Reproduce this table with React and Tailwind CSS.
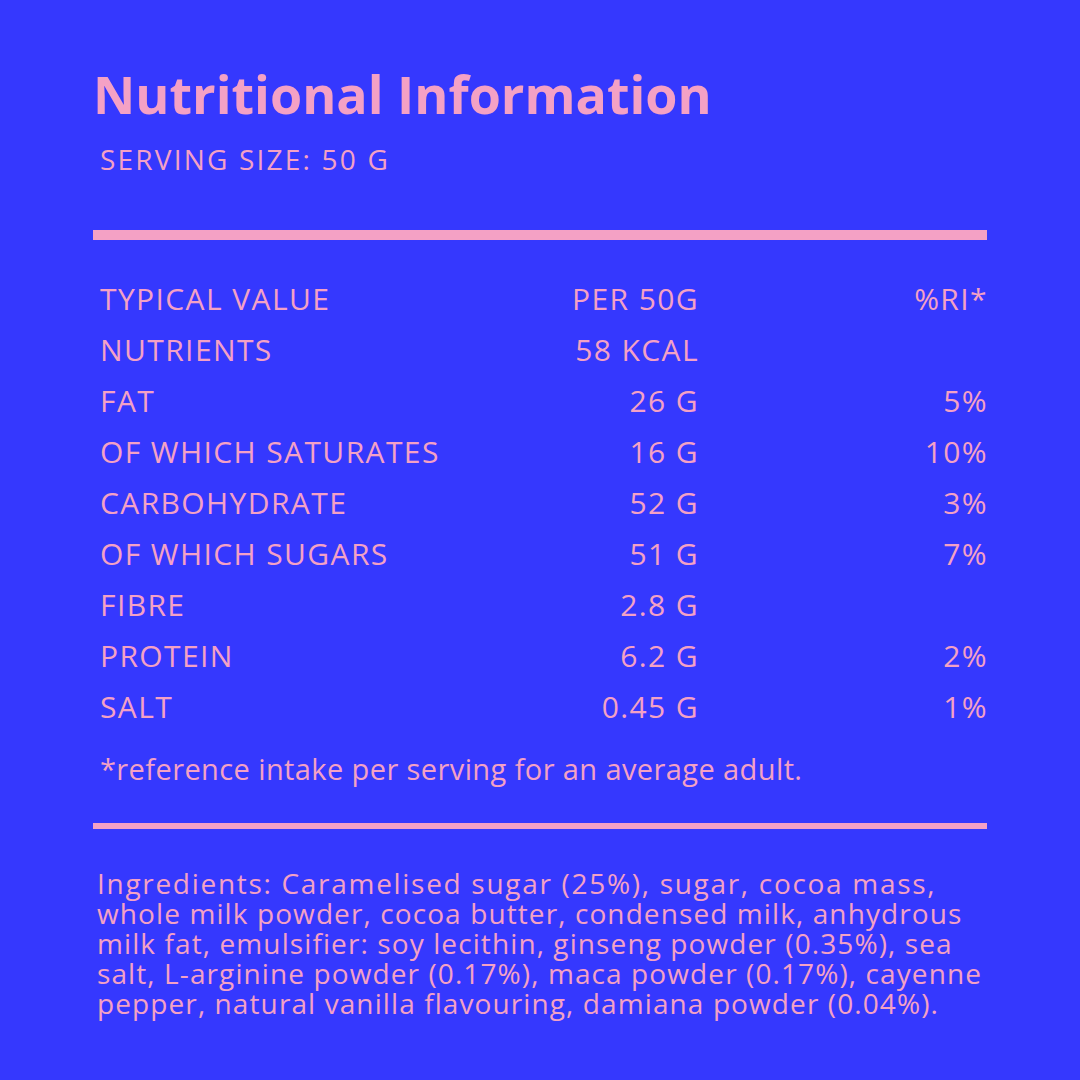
const rows = [
  { label: 'TYPICAL VALUE', per: 'PER 50G', ri: '%RI*' },
  { label: 'NUTRIENTS', per: '58 KCAL', ri: '' },
  { label: 'FAT', per: '26 G', ri: '5%' },
  { label: 'OF WHICH SATURATES', per: '16 G', ri: '10%' },
  { label: 'CARBOHYDRATE', per: '52 G', ri: '3%' },
  { label: 'OF WHICH SUGARS', per: '51 G', ri: '7%' },
  { label: 'FIBRE', per: '2.8 G', ri: '' },
  { label: 'PROTEIN', per: '6.2 G', ri: '2%' },
  { label: 'SALT', per: '0.45 G', ri: '1%' },
]

// wrapped as in the printed label
const ingredients = [
  { text: 'Ingredients: Caramelised sugar (25%), sugar, cocoa mass,', wide: true },
  { text: 'whole milk powder, cocoa butter, condensed milk, anhydrous' },
  { text: 'milk fat, emulsifier: soy lecithin, ginseng powder (0.35%), sea' },
  { text: 'salt, L-arginine powder (0.17%), maca powder (0.17%), cayenne' },
  { text: 'pepper, natural vanilla flavouring, damiana powder (0.04%).' },
]

const App = () => {
  return (
    <div className="w-[1080px] h-[1080px] bg-[#3538fe] text-[#f4a1c5] font-['Open_Sans',sans-serif] px-[93px] pt-[62px]">
      <h1 className="text-[52px] font-bold leading-[64px]">Nutritional Information</h1>
      <p className="text-[28px] leading-[40px] mt-[13px] pl-[7px] tracking-[2.2px]">SERVING SIZE: 50 G</p>

      <div className="h-[10px] bg-[#f4a1c5] mt-[51px]" />

      <div className="mt-[33px] pl-[7px]">
        {rows.map((r) => (
          <div key={r.label} className="flex h-[51px] items-center text-[30px] tracking-[1.4px]">
            <span className="flex-1">{r.label}</span>
            <span className="w-[200px] text-right -mr-[1px]">{r.per}</span>
            <span className="w-[290px] text-right -mr-[1px]">{r.ri}</span>
          </div>
        ))}
      </div>

      <p className="text-[29px] mt-[17px] pl-[7px] leading-[40px] tracking-[0.4px]">*reference intake per serving for an average adult.</p>

      <div className="h-[6px] bg-[#f4a1c5] mt-[34px]" />

      <div className="text-[28px] leading-[30px] mt-[39px] pl-[4px] whitespace-nowrap">
        {ingredients.map((line) => (
          <p key={line.text} className={line.wide ? 'tracking-[1.7px]' : 'tracking-[1.1px]'}>
            {line.text}
          </p>
        ))}
      </div>
    </div>
  )
}

export default App
